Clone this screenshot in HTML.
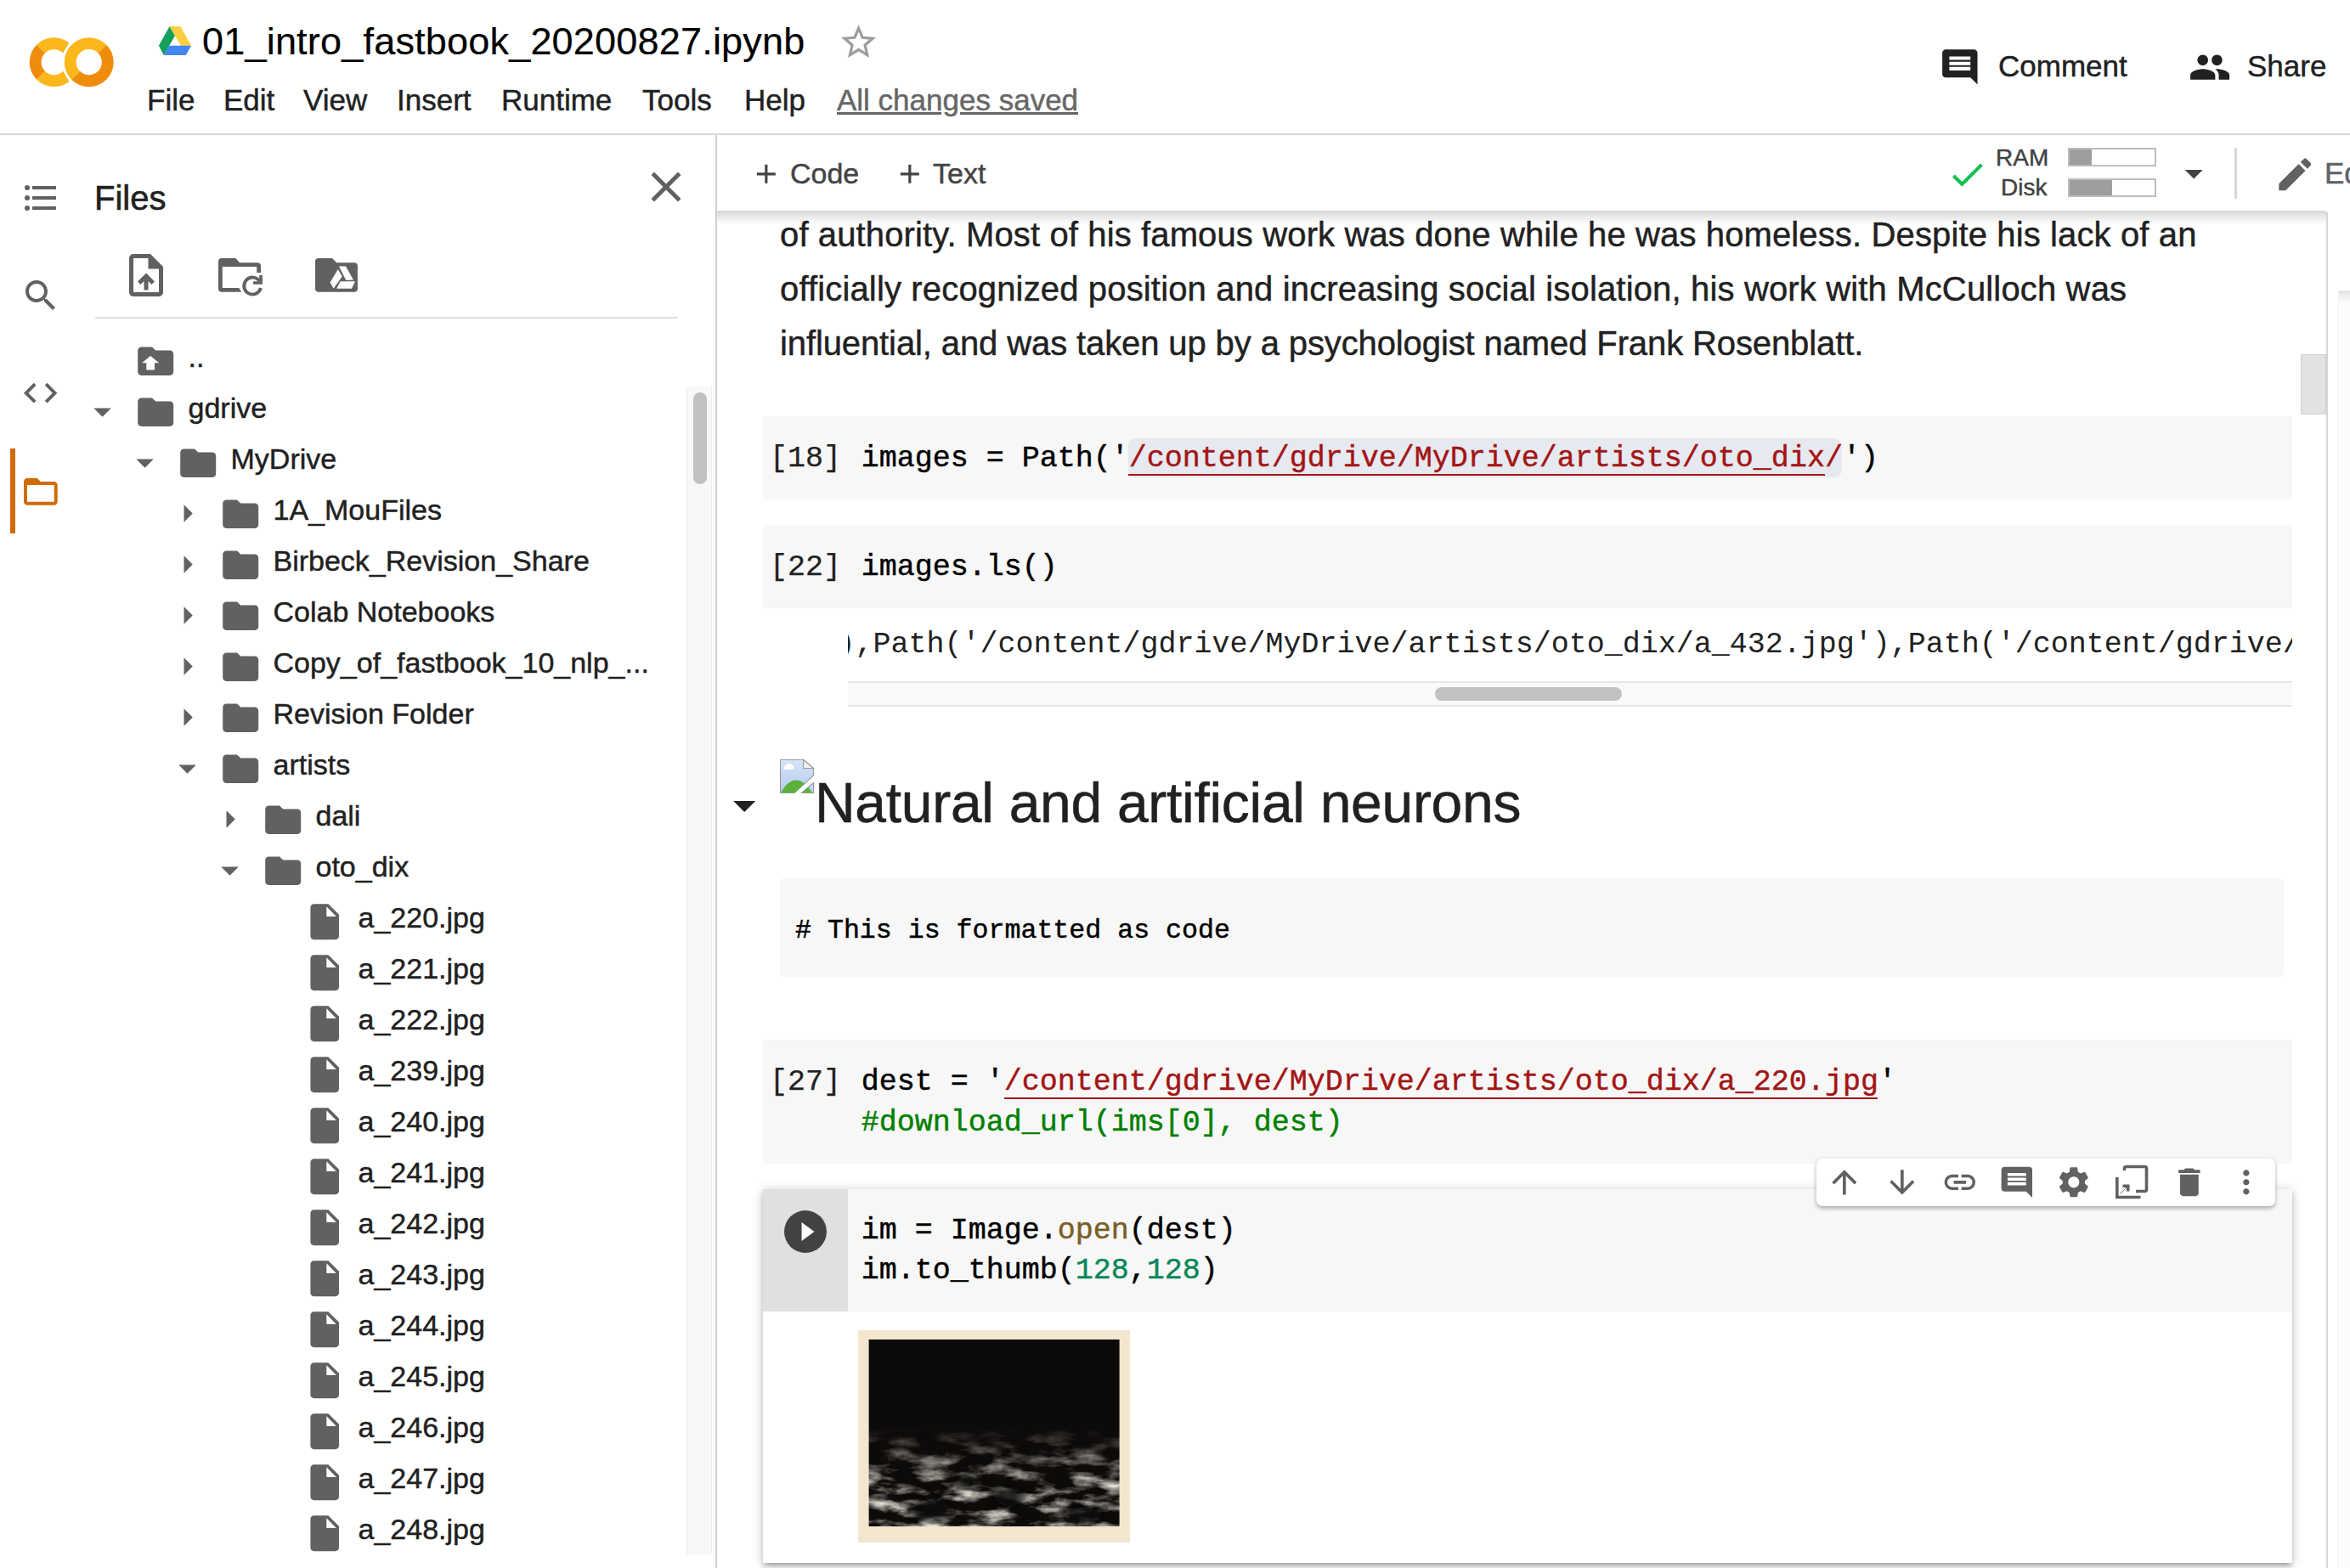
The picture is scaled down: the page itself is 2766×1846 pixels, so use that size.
<!DOCTYPE html>
<html><head><meta charset="utf-8">
<style>
html,body{margin:0;padding:0;width:2766px;height:1846px;overflow:hidden;background:#fff;}
body{position:relative;font-family:"Liberation Sans",sans-serif;color:#212121;}
.a{position:absolute;}
.t{position:absolute;white-space:nowrap;line-height:1;font-family:"Liberation Sans",sans-serif;-webkit-text-stroke:0.45px currentColor;}
.m{position:absolute;white-space:nowrap;line-height:1;font-family:"Liberation Mono",monospace;}
svg{position:absolute;overflow:visible;}
.k{-webkit-text-stroke:0.45px currentColor;}
.s{color:#a31515;} .c{color:#008000;} .n{color:#098658;} .f{color:#795e26;}
</style></head><body>

<div class="a" style="left:0px;top:157px;width:2766px;height:2px;background:#dadada;"></div>
<svg style="left:34.3px;top:22.8px" width="100.4" height="100.4" viewBox="0 0 24 24">
<path fill="#EE8D0B" d="M4.54,9.46,2.19,7.1a6.93,6.93,0,0,0,0,9.79l2.36-2.36A3.59,3.59,0,0,1,4.54,9.46Z"/>
<path fill="#FCB71B" d="M2.19,7.1,4.54,9.46a3.59,3.59,0,0,1,5.08,0l1.71-2.93h0l-.1-.08h0A6.93,6.93,0,0,0,2.19,7.1Z"/>
<path fill="#FCB71B" d="M11.34,17.46h0L9.62,14.54a3.59,3.59,0,0,1-5.08,0L2.19,16.9a6.93,6.93,0,0,0,9,.65l.11-.09"/>
<path fill="#FCB71B" d="M12,7.1a6.93,6.93,0,0,0,0,9.79l2.36-2.36a3.59,3.59,0,1,1,5.08-5.08L21.81,7.1A6.93,6.93,0,0,0,12,7.1Z"/>
<path fill="#EE8D0B" d="M21.81,7.1,19.46,9.46a3.59,3.59,0,0,1-5.08,5.08L12,16.9A6.93,6.93,0,0,0,21.81,7.1Z"/>
</svg>
<svg style="left:0;top:0" width="300" height="100" viewBox="0 0 300 100">
<polygon fill="#12A05A" points="199.6,31 206,42 192.7,64.9 186.9,53.8"/>
<polygon fill="#FFCD40" points="199.6,31 212.4,31 225.1,53.8 212.9,53.8 206,42"/>
<polygon fill="#4285F4" points="198.8,53.8 225.1,53.8 218.7,64.9 192.7,64.9"/>
</svg>
<div class="t" style="left:238.0px;top:25.9px;font-size:45px;color:#000;letter-spacing:0.2px;-webkit-text-stroke:0.2px #000;">01_intro_fastbook_20200827.ipynb</div>
<svg style="left:985.9px;top:24.9px" width="49.2" height="49.2" viewBox="0 0 24 24"><path fill="#9e9e9e" d="M22 9.24l-7.19-.62L12 2 9.19 8.63 2 9.24l5.46 4.73L5.82 21 12 17.27 18.18 21l-1.63-7.03L22 9.24zM12 15.4l-3.76 2.27 1-4.28-3.32-2.88 4.38-.38L12 6.1l1.71 4.04 4.38.38-3.32 2.88 1 4.28L12 15.4z"/></svg>
<div class="t" style="left:173.0px;top:100.4px;font-size:35px;color:#212121;">File</div>
<div class="t" style="left:263.0px;top:100.4px;font-size:35px;color:#212121;">Edit</div>
<div class="t" style="left:357.0px;top:100.4px;font-size:35px;color:#212121;">View</div>
<div class="t" style="left:467.0px;top:100.4px;font-size:35px;color:#212121;">Insert</div>
<div class="t" style="left:590.0px;top:100.4px;font-size:35px;color:#212121;">Runtime</div>
<div class="t" style="left:756.0px;top:100.4px;font-size:35px;color:#212121;">Tools</div>
<div class="t" style="left:876.0px;top:100.4px;font-size:35px;color:#212121;">Help</div>
<div class="t" style="left:985.0px;top:100.4px;font-size:35px;color:#666;text-decoration:underline;">All changes saved</div>
<svg style="left:2281.9px;top:54.2px" width="49.7" height="49.7" viewBox="0 0 24 24"><path fill="#212121" d="M21.99 4c0-1.1-.89-2-1.99-2H4c-1.1 0-2 .9-2 2v12c0 1.1.9 2 2 2h14l4 4-.01-18zM18 14H6v-2h12v2zm0-3H6V9h12v2zm0-3H6V6h12v2z"/></svg>
<div class="t" style="left:2352.0px;top:60.4px;font-size:35px;color:#212121;">Comment</div>
<svg style="left:2575.9px;top:53.5px" width="50.2" height="50.2" viewBox="0 0 24 24"><path fill="#212121" d="M16 11c1.66 0 2.99-1.34 2.99-3S17.66 5 16 5c-1.66 0-3 1.34-3 3s1.34 3 3 3zm-8 0c1.66 0 2.99-1.34 2.99-3S9.66 5 8 5C6.34 5 5 6.34 5 8s1.34 3 3 3zm0 2c-2.33 0-7 1.17-7 3.5V19h14v-2.5c0-2.33-4.67-3.5-7-3.5zm8 0c-.29 0-.62.02-.97.05 1.16.84 1.97 1.97 1.97 3.45V19h6v-2.5c0-2.33-4.67-3.5-7-3.5z"/></svg>
<div class="t" style="left:2645.0px;top:60.4px;font-size:35px;color:#212121;">Share</div>
<div class="a" style="left:28.7px;top:217.7px;width:6.4px;height:6.4px;border-radius:50%;background:#616161;"></div>
<div class="a" style="left:38px;top:218.9px;width:28px;height:4px;background:#616161;"></div>
<div class="a" style="left:28.7px;top:229.6px;width:6.4px;height:6.4px;border-radius:50%;background:#616161;"></div>
<div class="a" style="left:38px;top:230.8px;width:28px;height:4px;background:#616161;"></div>
<div class="a" style="left:28.7px;top:241.6px;width:6.4px;height:6.4px;border-radius:50%;background:#616161;"></div>
<div class="a" style="left:38px;top:242.8px;width:28px;height:4px;background:#616161;"></div>
<svg style="left:23.7px;top:324.0px" width="48.0" height="48.0" viewBox="0 0 24 24"><path fill="#616161" d="M15.5 14h-.79l-.28-.27C15.41 12.59 16 11.11 16 9.5 16 5.91 13.09 3 9.5 3S3 5.91 3 9.5 5.91 16 9.5 16c1.61 0 3.09-.59 4.23-1.57l.27.28v.79l5 4.99L20.49 19l-4.99-5zm-6 0C7.01 14 5 11.99 5 9.5S7.01 5 9.5 5 14 7.01 14 9.5 11.99 14 9.5 14z"/></svg>
<svg style="left:24.4px;top:439.2px" width="47.3" height="47.3" viewBox="0 0 24 24"><path fill="#616161" d="M9.4 16.6L4.8 12l4.6-4.6L8 6l-6 6 6 6 1.4-1.4zm5.2 0l4.6-4.6-4.6-4.6L16 6l6 6-6 6-1.4-1.4z"/></svg>
<div class="a" style="left:12px;top:528px;width:6px;height:100px;background:#d06b08;"></div>
<svg style="left:24.0px;top:555.0px" width="47.7" height="47.7" viewBox="0 0 24 24"><path fill="#d06b08" d="M20 6h-8l-2-2H4c-1.1 0-1.99.9-1.99 2L2 18c0 1.1.9 2 2 2h16c1.1 0 2-.9 2-2V8c0-1.1-.9-2-2-2zm0 12H4V8h16v10z"/></svg>
<div class="a" style="left:842px;top:159px;width:2px;height:1687px;background:#d0d0d0;"></div>
<div class="t" style="left:111.0px;top:212.6px;font-size:40px;color:#212121;-webkit-text-stroke:0.6px #212121;">Files</div>
<svg style="left:754.0px;top:189.5px" width="60.0" height="60.0" viewBox="0 0 24 24"><path fill="#616161" d="M19 6.41L17.59 5 12 10.59 6.41 5 5 6.41 10.59 12 5 17.59 6.41 19 12 13.41 17.59 19 19 17.59 13.41 12z"/></svg>
<svg style="left:142.0px;top:294.0px" width="60.0" height="60.0" viewBox="0 0 24 24"><path fill="#616161" d="M14 2H6c-1.1 0-1.99.9-1.99 2L4 20c0 1.1.89 2 1.99 2H18c1.1 0 2-.9 2-2V8l-6-6zm4 18H6V4h7v5h5v11zM8 15.01l1.41 1.41L11 14.84V19h2v-4.16l1.59 1.59L16 15.01 12.01 11 8 15.01z"/></svg>
<svg style="left:0;top:0" width="450" height="360" viewBox="0 0 450 360">
<path fill="#616161" d="M261,303.9H277.3L282.2,309.2H303a4,4 0 0 1 4,4V321.1H302.2V313.9H261.8V338.9H281.3L284.2,343.8H261a4,4 0 0 1 -4,-4V307.9a4,4 0 0 1 4,-4Z"/>
<path fill="none" stroke="#616161" stroke-width="3.9" d="M306.9,339.1A10,10 0 1 1 305.4,330.8"/>
<polygon fill="#616161" points="305.2,324.1 308.9,324.1 308.9,334.7 298.1,334.7 298.1,331.2 305.2,331.2"/>
<path fill="#616161" d="M375,303.9H391L396.2,309.2H416.9a4,4 0 0 1 4,4V339.8a4,4 0 0 1 -4,4H375a4,4 0 0 1 -4,-4V307.9a4,4 0 0 1 4,-4Z"/>
<polygon fill="#fff" points="397.8,317.1 402.7,325.6 392.6,339.7 388.5,332.4"/>
<polygon fill="#fff" points="399,313.4 407.1,313.4 416,329.8 407.1,329.8"/>
<polygon fill="#fff" points="400.6,331.2 418,331.2 414,339.7 396.2,339.7"/>
</svg>
<div class="a" style="left:112px;top:373px;width:686px;height:2px;background:#dedede;"></div>
<svg style="left:157.8px;top:399.6px" width="50.4" height="50.4" viewBox="0 0 24 24"><path fill="#616161" d="M10 4H4c-1.1 0-1.99.9-1.99 2L2 18c0 1.1.9 2 2 2h16c1.1 0 2-.9 2-2V8c0-1.1-.9-2-2-2h-8l-2-2z"/><polygon fill="#fff" points="9.1,9.1 13.9,13 11.4,13 11.4,16.9 6.8,16.9 6.8,13 4.3,13"/></svg>
<div class="t" style="left:221.5px;top:403.2px;font-size:34px;color:#212121;">..</div>
<svg style="left:157.8px;top:459.6px" width="50.4" height="50.4" viewBox="0 0 24 24"><path fill="#616161" d="M10 4H4c-1.1 0-1.99.9-1.99 2L2 18c0 1.1.9 2 2 2h16c1.1 0 2-.9 2-2V8c0-1.1-.9-2-2-2h-8l-2-2z"/></svg>
<svg style="left:96.4px;top:460.1px" width="49.2" height="49.2" viewBox="0 0 24 24"><path fill="#616161" d="M7 10l5 5 5-5z"/></svg>
<div class="t" style="left:221.5px;top:463.2px;font-size:34px;color:#212121;">gdrive</div>
<svg style="left:207.8px;top:519.6px" width="50.4" height="50.4" viewBox="0 0 24 24"><path fill="#616161" d="M10 4H4c-1.1 0-1.99.9-1.99 2L2 18c0 1.1.9 2 2 2h16c1.1 0 2-.9 2-2V8c0-1.1-.9-2-2-2h-8l-2-2z"/></svg>
<svg style="left:146.3px;top:520.1px" width="49.2" height="49.2" viewBox="0 0 24 24"><path fill="#616161" d="M7 10l5 5 5-5z"/></svg>
<div class="t" style="left:271.5px;top:523.2px;font-size:34px;color:#212121;">MyDrive</div>
<svg style="left:257.8px;top:579.6px" width="50.4" height="50.4" viewBox="0 0 24 24"><path fill="#616161" d="M10 4H4c-1.1 0-1.99.9-1.99 2L2 18c0 1.1.9 2 2 2h16c1.1 0 2-.9 2-2V8c0-1.1-.9-2-2-2h-8l-2-2z"/></svg>
<svg style="left:196.2px;top:579.6px" width="49.2" height="49.2" viewBox="0 0 24 24"><path fill="#616161" d="M10 17l5-5-5-5v10z"/></svg>
<div class="t" style="left:321.5px;top:583.2px;font-size:34px;color:#212121;">1A_MouFiles</div>
<svg style="left:257.8px;top:639.6px" width="50.4" height="50.4" viewBox="0 0 24 24"><path fill="#616161" d="M10 4H4c-1.1 0-1.99.9-1.99 2L2 18c0 1.1.9 2 2 2h16c1.1 0 2-.9 2-2V8c0-1.1-.9-2-2-2h-8l-2-2z"/></svg>
<svg style="left:196.2px;top:639.6px" width="49.2" height="49.2" viewBox="0 0 24 24"><path fill="#616161" d="M10 17l5-5-5-5v10z"/></svg>
<div class="t" style="left:321.5px;top:643.2px;font-size:34px;color:#212121;">Birbeck_Revision_Share</div>
<svg style="left:257.8px;top:699.6px" width="50.4" height="50.4" viewBox="0 0 24 24"><path fill="#616161" d="M10 4H4c-1.1 0-1.99.9-1.99 2L2 18c0 1.1.9 2 2 2h16c1.1 0 2-.9 2-2V8c0-1.1-.9-2-2-2h-8l-2-2z"/></svg>
<svg style="left:196.2px;top:699.6px" width="49.2" height="49.2" viewBox="0 0 24 24"><path fill="#616161" d="M10 17l5-5-5-5v10z"/></svg>
<div class="t" style="left:321.5px;top:703.2px;font-size:34px;color:#212121;">Colab Notebooks</div>
<svg style="left:257.8px;top:759.6px" width="50.4" height="50.4" viewBox="0 0 24 24"><path fill="#616161" d="M10 4H4c-1.1 0-1.99.9-1.99 2L2 18c0 1.1.9 2 2 2h16c1.1 0 2-.9 2-2V8c0-1.1-.9-2-2-2h-8l-2-2z"/></svg>
<svg style="left:196.2px;top:759.6px" width="49.2" height="49.2" viewBox="0 0 24 24"><path fill="#616161" d="M10 17l5-5-5-5v10z"/></svg>
<div class="t" style="left:321.5px;top:763.2px;font-size:34px;color:#212121;">Copy_of_fastbook_10_nlp_...</div>
<svg style="left:257.8px;top:819.6px" width="50.4" height="50.4" viewBox="0 0 24 24"><path fill="#616161" d="M10 4H4c-1.1 0-1.99.9-1.99 2L2 18c0 1.1.9 2 2 2h16c1.1 0 2-.9 2-2V8c0-1.1-.9-2-2-2h-8l-2-2z"/></svg>
<svg style="left:196.2px;top:819.6px" width="49.2" height="49.2" viewBox="0 0 24 24"><path fill="#616161" d="M10 17l5-5-5-5v10z"/></svg>
<div class="t" style="left:321.5px;top:823.2px;font-size:34px;color:#212121;">Revision Folder</div>
<svg style="left:257.8px;top:879.6px" width="50.4" height="50.4" viewBox="0 0 24 24"><path fill="#616161" d="M10 4H4c-1.1 0-1.99.9-1.99 2L2 18c0 1.1.9 2 2 2h16c1.1 0 2-.9 2-2V8c0-1.1-.9-2-2-2h-8l-2-2z"/></svg>
<svg style="left:196.3px;top:880.1px" width="49.2" height="49.2" viewBox="0 0 24 24"><path fill="#616161" d="M7 10l5 5 5-5z"/></svg>
<div class="t" style="left:321.5px;top:883.2px;font-size:34px;color:#212121;">artists</div>
<svg style="left:307.8px;top:939.6px" width="50.4" height="50.4" viewBox="0 0 24 24"><path fill="#616161" d="M10 4H4c-1.1 0-1.99.9-1.99 2L2 18c0 1.1.9 2 2 2h16c1.1 0 2-.9 2-2V8c0-1.1-.9-2-2-2h-8l-2-2z"/></svg>
<svg style="left:246.2px;top:939.6px" width="49.2" height="49.2" viewBox="0 0 24 24"><path fill="#616161" d="M10 17l5-5-5-5v10z"/></svg>
<div class="t" style="left:371.5px;top:943.2px;font-size:34px;color:#212121;">dali</div>
<svg style="left:307.8px;top:999.6px" width="50.4" height="50.4" viewBox="0 0 24 24"><path fill="#616161" d="M10 4H4c-1.1 0-1.99.9-1.99 2L2 18c0 1.1.9 2 2 2h16c1.1 0 2-.9 2-2V8c0-1.1-.9-2-2-2h-8l-2-2z"/></svg>
<svg style="left:246.3px;top:1000.1px" width="49.2" height="49.2" viewBox="0 0 24 24"><path fill="#616161" d="M7 10l5 5 5-5z"/></svg>
<div class="t" style="left:371.5px;top:1003.2px;font-size:34px;color:#212121;">oto_dix</div>
<svg style="left:357.4px;top:1059.5px" width="50.4" height="50.4" viewBox="0 0 24 24"><path fill="#616161" d="M6 2c-1.1 0-1.99.9-1.99 2L4 20c0 1.1.89 2 1.99 2H18c1.1 0 2-.9 2-2V8l-6-6H6zm7 7V3.5L18.5 9H13z"/></svg>
<div class="t" style="left:421.5px;top:1063.2px;font-size:34px;color:#212121;">a_220.jpg</div>
<svg style="left:357.4px;top:1119.5px" width="50.4" height="50.4" viewBox="0 0 24 24"><path fill="#616161" d="M6 2c-1.1 0-1.99.9-1.99 2L4 20c0 1.1.89 2 1.99 2H18c1.1 0 2-.9 2-2V8l-6-6H6zm7 7V3.5L18.5 9H13z"/></svg>
<div class="t" style="left:421.5px;top:1123.2px;font-size:34px;color:#212121;">a_221.jpg</div>
<svg style="left:357.4px;top:1179.5px" width="50.4" height="50.4" viewBox="0 0 24 24"><path fill="#616161" d="M6 2c-1.1 0-1.99.9-1.99 2L4 20c0 1.1.89 2 1.99 2H18c1.1 0 2-.9 2-2V8l-6-6H6zm7 7V3.5L18.5 9H13z"/></svg>
<div class="t" style="left:421.5px;top:1183.2px;font-size:34px;color:#212121;">a_222.jpg</div>
<svg style="left:357.4px;top:1239.5px" width="50.4" height="50.4" viewBox="0 0 24 24"><path fill="#616161" d="M6 2c-1.1 0-1.99.9-1.99 2L4 20c0 1.1.89 2 1.99 2H18c1.1 0 2-.9 2-2V8l-6-6H6zm7 7V3.5L18.5 9H13z"/></svg>
<div class="t" style="left:421.5px;top:1243.2px;font-size:34px;color:#212121;">a_239.jpg</div>
<svg style="left:357.4px;top:1299.5px" width="50.4" height="50.4" viewBox="0 0 24 24"><path fill="#616161" d="M6 2c-1.1 0-1.99.9-1.99 2L4 20c0 1.1.89 2 1.99 2H18c1.1 0 2-.9 2-2V8l-6-6H6zm7 7V3.5L18.5 9H13z"/></svg>
<div class="t" style="left:421.5px;top:1303.2px;font-size:34px;color:#212121;">a_240.jpg</div>
<svg style="left:357.4px;top:1359.5px" width="50.4" height="50.4" viewBox="0 0 24 24"><path fill="#616161" d="M6 2c-1.1 0-1.99.9-1.99 2L4 20c0 1.1.89 2 1.99 2H18c1.1 0 2-.9 2-2V8l-6-6H6zm7 7V3.5L18.5 9H13z"/></svg>
<div class="t" style="left:421.5px;top:1363.2px;font-size:34px;color:#212121;">a_241.jpg</div>
<svg style="left:357.4px;top:1419.5px" width="50.4" height="50.4" viewBox="0 0 24 24"><path fill="#616161" d="M6 2c-1.1 0-1.99.9-1.99 2L4 20c0 1.1.89 2 1.99 2H18c1.1 0 2-.9 2-2V8l-6-6H6zm7 7V3.5L18.5 9H13z"/></svg>
<div class="t" style="left:421.5px;top:1423.2px;font-size:34px;color:#212121;">a_242.jpg</div>
<svg style="left:357.4px;top:1479.5px" width="50.4" height="50.4" viewBox="0 0 24 24"><path fill="#616161" d="M6 2c-1.1 0-1.99.9-1.99 2L4 20c0 1.1.89 2 1.99 2H18c1.1 0 2-.9 2-2V8l-6-6H6zm7 7V3.5L18.5 9H13z"/></svg>
<div class="t" style="left:421.5px;top:1483.2px;font-size:34px;color:#212121;">a_243.jpg</div>
<svg style="left:357.4px;top:1539.5px" width="50.4" height="50.4" viewBox="0 0 24 24"><path fill="#616161" d="M6 2c-1.1 0-1.99.9-1.99 2L4 20c0 1.1.89 2 1.99 2H18c1.1 0 2-.9 2-2V8l-6-6H6zm7 7V3.5L18.5 9H13z"/></svg>
<div class="t" style="left:421.5px;top:1543.2px;font-size:34px;color:#212121;">a_244.jpg</div>
<svg style="left:357.4px;top:1599.5px" width="50.4" height="50.4" viewBox="0 0 24 24"><path fill="#616161" d="M6 2c-1.1 0-1.99.9-1.99 2L4 20c0 1.1.89 2 1.99 2H18c1.1 0 2-.9 2-2V8l-6-6H6zm7 7V3.5L18.5 9H13z"/></svg>
<div class="t" style="left:421.5px;top:1603.2px;font-size:34px;color:#212121;">a_245.jpg</div>
<svg style="left:357.4px;top:1659.5px" width="50.4" height="50.4" viewBox="0 0 24 24"><path fill="#616161" d="M6 2c-1.1 0-1.99.9-1.99 2L4 20c0 1.1.89 2 1.99 2H18c1.1 0 2-.9 2-2V8l-6-6H6zm7 7V3.5L18.5 9H13z"/></svg>
<div class="t" style="left:421.5px;top:1663.2px;font-size:34px;color:#212121;">a_246.jpg</div>
<svg style="left:357.4px;top:1719.5px" width="50.4" height="50.4" viewBox="0 0 24 24"><path fill="#616161" d="M6 2c-1.1 0-1.99.9-1.99 2L4 20c0 1.1.89 2 1.99 2H18c1.1 0 2-.9 2-2V8l-6-6H6zm7 7V3.5L18.5 9H13z"/></svg>
<div class="t" style="left:421.5px;top:1723.2px;font-size:34px;color:#212121;">a_247.jpg</div>
<svg style="left:357.4px;top:1779.5px" width="50.4" height="50.4" viewBox="0 0 24 24"><path fill="#616161" d="M6 2c-1.1 0-1.99.9-1.99 2L4 20c0 1.1.89 2 1.99 2H18c1.1 0 2-.9 2-2V8l-6-6H6zm7 7V3.5L18.5 9H13z"/></svg>
<div class="t" style="left:421.5px;top:1783.2px;font-size:34px;color:#212121;">a_248.jpg</div>
<div class="a" style="left:808px;top:455px;width:30px;height:1375px;background:#f8f8f8;border-left:1px solid #ececec;border-right:1px solid #ececec;box-sizing:border-box;"></div>
<div class="a" style="left:815.8px;top:461.5px;width:16px;height:108.5px;border-radius:8px;background:#c1c1c1;"></div>
<div class="a" style="left:844px;top:159px;width:1922px;height:89px;background:#fff;"></div>
<div class="a" style="left:844px;top:248px;width:1894px;height:16px;background:linear-gradient(#d8d8d8,rgba(255,255,255,0));"></div>
<svg style="left:883.1px;top:185.6px" width="37.7" height="37.7" viewBox="0 0 24 24"><path fill="#444" d="M19 13h-6v6h-2v-6H5v-2h6V5h2v6h6v2z"/></svg>
<div class="t" style="left:930.0px;top:187.2px;font-size:34px;color:#444;">Code</div>
<svg style="left:1052.1px;top:185.6px" width="37.7" height="37.7" viewBox="0 0 24 24"><path fill="#444" d="M19 13h-6v6h-2v-6H5v-2h6V5h2v6h6v2z"/></svg>
<div class="t" style="left:1098.0px;top:187.2px;font-size:34px;color:#444;">Text</div>
<svg style="left:2290.5px;top:180.5px" width="49.0" height="49.0" viewBox="0 0 24 24"><path fill="#10c050" d="M9 16.17L4.83 12l-1.42 1.41L9 19 21 7l-1.41-1.41z"/></svg>
<div class="t" style="left:2349.0px;top:172.3px;font-size:28px;color:#424242;">RAM</div>
<div class="t" style="left:2355.0px;top:207.3px;font-size:28px;color:#424242;">Disk</div>
<div class="a" style="left:2434px;top:174px;width:104px;height:22px;background:#fff;border:2px solid #bdbdbd;box-sizing:border-box;"></div>
<div class="a" style="left:2436px;top:176px;width:26px;height:18px;background:#9e9e9e;"></div>
<div class="a" style="left:2434px;top:210px;width:104px;height:22px;background:#fff;border:2px solid #bdbdbd;box-sizing:border-box;"></div>
<div class="a" style="left:2436px;top:212px;width:50px;height:18px;background:#9e9e9e;"></div>
<svg style="left:2557.3px;top:179.4px" width="50.4" height="50.4" viewBox="0 0 24 24"><path fill="#424242" d="M7 10l5 5 5-5z"/></svg>
<div class="a" style="left:2630px;top:174px;width:3px;height:60px;background:#d6d6d6;"></div>
<svg style="left:2675.7px;top:179.7px" width="50.6" height="50.6" viewBox="0 0 24 24"><path fill="#616161" d="M3 17.25V21h3.75L17.81 9.94l-3.75-3.75L3 17.25zM20.71 7.04c.39-.39.39-1.02 0-1.41l-2.34-2.34c-.39-.39-1.02-.39-1.41 0l-1.83 1.83 3.75 3.75 1.83-1.83z"/></svg>
<div class="t" style="left:2736.0px;top:186.4px;font-size:35px;color:#5f6368;">Editing</div>
<div class="t" style="left:918.0px;top:256.1px;font-size:40px;color:#212121;letter-spacing:0.13px;">of authority. Most of his famous work was done while he was homeless. Despite his lack of an</div>
<div class="t" style="left:918.0px;top:320.1px;font-size:40px;color:#212121;letter-spacing:0.155px;">officially recognized position and increasing social isolation, his work with McCulloch was</div>
<div class="t" style="left:918.0px;top:384.1px;font-size:40px;color:#212121;letter-spacing:-0.11px;">influential, and was taken up by a psychologist named Frank Rosenblatt.</div>
<div class="a" style="left:2738px;top:250px;width:2px;height:1596px;background:#d6d6d6;"></div>
<div class="a" style="left:2708px;top:417px;width:30px;height:71px;background:#e2e2e2;border:1px solid #cfcfcf;box-sizing:border-box;"></div>
<div class="a" style="left:898px;top:490px;width:1800px;height:98px;background:#f7f7f7;"></div>
<div class="a" style="left:1328px;top:516px;width:840px;height:46px;border-radius:9px;background:#e6e9f0;"></div>
<div class="m" style="left:906.1px;top:522.7px;font-size:35px;color:#212121;-webkit-text-stroke:0.25px #212121;">[18]</div>
<div class="m k" style="left:1013.7px;top:522.7px;font-size:35px;color:#000;">images = Path('<span class="s">/content/gdrive/MyDrive/artists/oto_dix/</span>')</div>
<div class="a" style="left:1328px;top:557.5px;width:820px;height:2px;background:#a31515;"></div>
<div class="a" style="left:898px;top:618px;width:1800px;height:97.5px;background:#f7f7f7;"></div>
<div class="m" style="left:906.1px;top:650.6px;font-size:35px;color:#212121;-webkit-text-stroke:0.25px #212121;">[22]</div>
<div class="m k" style="left:1013.7px;top:650.6px;font-size:35px;color:#000;">images.ls()</div>
<div class="a" style="left:998px;top:720px;width:1700px;height:70px;overflow:hidden;">
<div class="m" style="left:-12.5px;top:21.7px;font-size:35px;color:#212121;">)<span>,Path('/content/gdrive/MyDrive/artists/oto_dix/a_432.jpg'),Path('/content/gdrive/MyDrive/artists/oto_dix/a_433.jpg')</span></div>
</div>
<div class="a" style="left:998px;top:802px;width:1700px;height:30px;background:#f9f9f9;border-top:2px solid #e6e6e6;border-bottom:2px solid #e6e6e6;box-sizing:border-box;"></div>
<div class="a" style="left:1689px;top:808.5px;width:220px;height:16px;border-radius:8px;background:#c1c1c1;"></div>
<svg style="left:844.8px;top:917.0px" width="62.4" height="62.4" viewBox="0 0 24 24"><path fill="#212121" d="M7 10l5 5 5-5z"/></svg>
<svg style="left:918px;top:894px" width="40" height="40" viewBox="0 0 40 40">
<defs><linearGradient id="bg1" x1="0" y1="0" x2="0" y2="1"><stop offset="0" stop-color="#d6e4f8"/><stop offset="1" stop-color="#b2cbed"/></linearGradient>
<clipPath id="cp1"><polygon points="0.5,0.5 27.7,0.5 39.5,10.5 39.5,19 17,39.5 0.5,39.5"/><polygon points="25.6,39.5 39.5,27.5 39.5,39.5"/></clipPath></defs>
<polygon fill="url(#bg1)" stroke="#9a9a9a" stroke-width="1.1" points="0.5,0.5 27.7,0.5 39.5,10.5 39.5,19 17,39.5 0.5,39.5"/>
<polygon fill="url(#bg1)" stroke="#9a9a9a" stroke-width="1.1" points="25.6,39.5 39.5,27.5 39.5,39.5"/>
<polygon fill="#f2f2f2" stroke="#9a9a9a" stroke-width="1.1" points="27.7,0.5 27.7,10.5 39.5,10.5"/>
<path fill="#fff" d="M5,9.5a3,3 0 0 1 3,-3a3.6,3.6 0 0 1 6.5,0.6a2.4,2.4 0 0 1 0.5,4.7h-10a1.3,1.3 0 0 1 0,-2.3z"/>
<g clip-path="url(#cp1)"><path fill="#5bb13c" d="M1,39.5C8,27 14,24 20,24.5C28,25 34,33 38,39.5z"/></g>
</svg>
<div class="t" style="left:959.0px;top:912.1px;font-size:66px;color:#212121;letter-spacing:-0.3px;-webkit-text-stroke:0.5px #212121;">Natural and artificial neurons</div>
<div class="a" style="left:918px;top:1034px;width:1770px;height:116px;border-radius:5px;background:#f7f7f7;"></div>
<div class="m k" style="left:936.0px;top:1079.8px;font-size:31.6px;color:#000;"># This is formatted as code</div>
<div class="a" style="left:898px;top:1224px;width:1800px;height:146px;background:#f7f7f7;"></div>
<div class="m" style="left:906.1px;top:1256.9px;font-size:35px;color:#212121;-webkit-text-stroke:0.25px #212121;">[27]</div>
<div class="m k" style="left:1013.7px;top:1256.9px;font-size:35px;color:#000;">dest = '<span class="s">/content/gdrive/MyDrive/artists/oto_dix/a_220.jpg</span>'</div>
<div class="a" style="left:1182px;top:1292px;width:1028px;height:2px;background:#a31515;"></div>
<div class="m k" style="left:1013.7px;top:1304.6px;font-size:35px;color:#000;"><span class="c">#download_url(ims[0], dest)</span></div>
<div class="a" style="left:898px;top:1400px;width:1800px;height:440px;background:#fff;box-shadow:0 5px 5px rgba(0,0,0,.14),0 7px 3px -5px rgba(0,0,0,.12),0 2px 12px rgba(0,0,0,.22);"></div>
<div class="a" style="left:898px;top:1400px;width:100px;height:144px;background:#e0e0e0;"></div>
<div class="a" style="left:998px;top:1400px;width:1700px;height:144px;background:#f7f7f7;"></div>
<div class="a" style="left:923px;top:1425px;width:50px;height:50px;border-radius:50%;background:#424242;"></div>
<svg style="left:0;top:0" width="1000" height="1500" viewBox="0 0 1000 1500"><polygon fill="#fff" points="943.5,1439 958.5,1450 943.5,1461"/></svg>
<div class="m k" style="left:1013.7px;top:1431.8px;font-size:35px;color:#000;">im = Image.<span class="f">open</span>(dest)</div>
<div class="m k" style="left:1013.7px;top:1478.9px;font-size:35px;color:#000;">im.to_thumb(<span class="n">128</span>,<span class="n">128</span>)</div>
<svg style="left:1010px;top:1566px" width="320" height="250" viewBox="0 0 320 250">
<defs>
<filter id="nz" x="0" y="0" width="100%" height="100%"><feTurbulence type="fractalNoise" baseFrequency="0.028 0.075" numOctaves="4" seed="11"/><feColorMatrix type="matrix" values="0 0 0 0 0.85  0 0 0 0 0.82  0 0 0 0 0.74  2.4 0 0 0 -1.05"/></filter>
<filter id="bl"><feGaussianBlur stdDeviation="4"/></filter><clipPath id="ic"><rect x="12.6" y="11" width="295" height="220"/></clipPath>
<linearGradient id="fade" x1="0" y1="0" x2="0" y2="1"><stop offset="0" stop-color="#fff" stop-opacity="0"/><stop offset="0.46" stop-color="#fff" stop-opacity="0"/><stop offset="0.70" stop-color="#fff" stop-opacity="0.95"/><stop offset="1" stop-color="#fff" stop-opacity="1"/></linearGradient>
<mask id="mk"><rect x="0" y="0" width="320" height="250" fill="url(#fade)"/></mask>
</defs>
<rect x="0" y="0" width="320" height="250" fill="#f3e6cf"/>
<rect x="12.6" y="11" width="295" height="220" fill="#0d0b0a"/>
<g mask="url(#mk)"><rect x="12.6" y="11" width="295" height="220" filter="url(#nz)"/></g>
<g clip-path="url(#ic)"><g filter="url(#bl)" fill="#0d0b0a" opacity="0.8">
<ellipse cx="85" cy="212" rx="24" ry="12"/><ellipse cx="178" cy="196" rx="18" ry="11"/><ellipse cx="265" cy="218" rx="22" ry="10"/><ellipse cx="130" cy="178" rx="14" ry="8"/>
</g></g>
</svg>
<div class="a" style="left:2138px;top:1364px;width:540px;height:56px;border-radius:7px;background:#fff;box-shadow:0 3px 4px rgba(0,0,0,.22),0 1px 6px rgba(0,0,0,.12);"></div>
<svg style="left:2149.2px;top:1370.4px" width="43.7" height="43.7" viewBox="0 0 24 24"><path fill="#616161" d="M4 12l1.41 1.41L11 7.83V20h2V7.83l5.58 5.59L20 12l-8-8-8 8z"/></svg>
<svg style="left:2217.2px;top:1370.4px" width="43.7" height="43.7" viewBox="0 0 24 24"><path fill="#616161" d="M20 12l-1.41-1.41L13 16.17V4h-2v12.17l-5.58-5.59L4 12l8 8 8-8z"/></svg>
<svg style="left:2285.2px;top:1370.4px" width="43.7" height="43.7" viewBox="0 0 24 24"><path fill="#616161" d="M3.9 12c0-1.71 1.39-3.1 3.1-3.1h4V7H7c-2.76 0-5 2.24-5 5s2.24 5 5 5h4v-1.9H7c-1.71 0-3.1-1.39-3.1-3.1zM8 13h8v-2H8v2zm9-6h-4v1.9h4c1.71 0 3.1 1.39 3.1 3.1s-1.39 3.1-3.1 3.1h-4V17h4c2.76 0 5-2.24 5-5s-2.24-5-5-5z"/></svg>
<svg style="left:2352.2px;top:1370.4px" width="43.7" height="43.7" viewBox="0 0 24 24"><path fill="#616161" d="M21.99 4c0-1.1-.89-2-1.99-2H4c-1.1 0-2 .9-2 2v12c0 1.1.9 2 2 2h14l4 4-.01-18zM18 14H6v-2h12v2zm0-3H6V9h12v2zm0-3H6V6h12v2z"/></svg>
<svg style="left:2419.2px;top:1370.4px" width="43.7" height="43.7" viewBox="0 0 24 24"><path fill="#616161" d="M19.14 12.94c.04-.3.06-.61.06-.94 0-.32-.02-.64-.07-.94l2.03-1.58c.18-.14.23-.41.12-.61l-1.92-3.32c-.12-.22-.37-.29-.59-.22l-2.39.96c-.5-.38-1.03-.7-1.62-.94l-.36-2.54c-.04-.24-.24-.41-.48-.41h-3.84c-.24 0-.43.17-.47.41l-.36 2.54c-.59.24-1.13.57-1.62.94l-2.39-.96c-.22-.08-.47 0-.59.22L2.74 8.87c-.12.21-.08.47.12.61l2.03 1.58c-.05.3-.09.63-.09.94s.02.64.07.94l-2.03 1.58c-.18.14-.23.41-.12.61l1.92 3.320c.12.22.37.29.59.22l2.39-.96c.5.38 1.03.7 1.62.94l.36 2.54c.05.24.24.41.48.41h3.84c.24 0 .44-.17.47-.41l.36-2.54c.59-.24 1.13-.56 1.62-.94l2.39.96c.22.08.47 0 .59-.22l1.92-3.32c.12-.22.07-.47-.12-.61l-2.01-1.58zM12 15.6c-1.98 0-3.6-1.62-3.6-3.6s1.62-3.6 3.6-3.6 3.6 1.62 3.6 3.6-1.62 3.6-3.6 3.6z"/></svg>
<svg style="left:2555.2px;top:1370.4px" width="43.7" height="43.7" viewBox="0 0 24 24"><path fill="#616161" d="M6 19c0 1.1.9 2 2 2h8c1.1 0 2-.9 2-2V7H6v12zM19 4h-3.5l-1-1h-5l-1 1H5v2h14V4z"/></svg>
<svg style="left:2622.2px;top:1370.4px" width="43.7" height="43.7" viewBox="0 0 24 24"><path fill="#616161" d="M12 8c1.1 0 2-.9 2-2s-.9-2-2-2-2 .9-2 2 .9 2 2 2zm0 2c-1.1 0-2 .9-2 2s.9 2 2 2 2-.9 2-2-.9-2-2-2zm0 6c-1.1 0-2 .9-2 2s.9 2 2 2 2-.9 2-2-.9-2-2-2z"/></svg>
<svg style="left:0;top:0" width="2700" height="1450" viewBox="0 0 2700 1450">
<path fill="none" stroke="#616161" stroke-width="3.6" d="M2500.5,1378V1375.5a2,2 0 0 1 2,-2H2524.5a2,2 0 0 1 2,2V1400.5a2,2 0 0 1 -2,2H2514"/>
<path fill="none" stroke="#616161" stroke-width="3.6" d="M2491.8,1386V1409.5H2519.5"/>
<path fill="#616161" d="M2496.5,1405L2503,1398.5V1402.5H2506.5V1394.5H2498.5V1398H2502.5L2494,1406.5Z"/>
</svg>
<div class="a" style="left:2752px;top:342px;width:14px;height:1504px;background:linear-gradient(#e2e2e2,#fcfcfc 14px,#fcfcfc);border-left:1px solid #f0f0f0;"></div>
</body></html>
